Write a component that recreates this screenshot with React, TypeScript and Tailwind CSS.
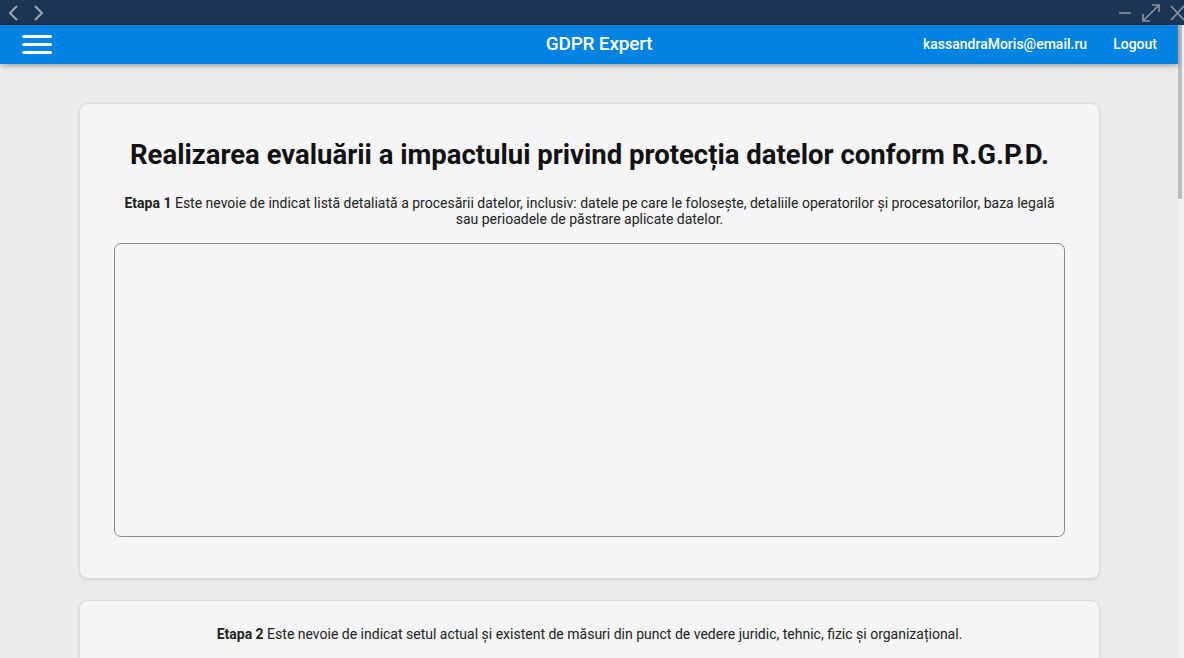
const App = () => {
  return (
    <div
      className="w-[1184px] h-[658px] overflow-hidden flex flex-col bg-[#ebebeb]"
      style={{ fontFamily: "Roboto, 'Liberation Sans', sans-serif" }}
    >
      {/* window bar */}
      <div className="h-[25px] shrink-0 bg-[#1c3553] flex items-center justify-between">
        <div className="flex items-center gap-[14px] pl-[7px]">
          <svg width="12" height="18" viewBox="0 0 12 18" fill="none" stroke="#9ca8b6" strokeWidth="2">
            <path d="M10 2 L3 9 L10 16" />
          </svg>
          <svg width="12" height="18" viewBox="0 0 12 18" fill="none" stroke="#9ca8b6" strokeWidth="2">
            <path d="M2 2 L9 9 L2 16" />
          </svg>
        </div>
        <div className="flex items-center gap-[9px] pr-0">
          <svg width="14" height="18" viewBox="0 0 14 18" fill="none" stroke="#8994a3" strokeWidth="1.6">
            <path d="M1 9 H13" />
          </svg>
          <svg width="20" height="20" viewBox="0 0 20 20" fill="none" stroke="#8994a3" strokeWidth="1.6">
            <path d="M2 18 L18 2 M11 2 H18 V9 M2 11 V18 H9" />
          </svg>
          <svg width="14" height="16" viewBox="0 0 14 16" fill="none" stroke="#8994a3" strokeWidth="1.8">
            <path d="M1 1 L14 15 M14 1 L1 15" />
          </svg>
        </div>
      </div>

      <div className="flex flex-1 min-h-0">
        <div className="flex-1 flex flex-col min-w-0">
          {/* app header */}
          <header className="h-[39px] shrink-0 bg-[#0083e3] shadow-[0_2px_5px_rgba(0,0,0,0.3)] flex items-center pl-[22px] pr-[21px] relative z-10">
            <div className="flex-1">
              <div className="w-[30px] flex flex-col gap-[5px]">
                <span className="block h-[3px] bg-white rounded-sm" />
                <span className="block h-[3px] bg-white rounded-sm" />
                <span className="block h-[3px] bg-white rounded-sm" />
              </div>
            </div>
            <div className="text-white text-[19px] font-medium tracking-[-0.2px] ml-[19px]">GDPR Expert</div>
            <div className="flex-1 flex items-center justify-end gap-[26px] text-white text-[14px] font-medium">
              <span>kassandraMoris@email.ru</span>
              <span>Logout</span>
            </div>
          </header>

          {/* content */}
          <main className="flex flex-col gap-[21px] pt-[39px] pl-[79px] pr-[78px]">
            <section className="bg-[#f5f5f7] rounded-[9px] border border-[#dcdcdc] shadow-[0_1px_3px_rgba(0,0,0,0.12)] px-[34px] pt-[35px] pb-[41px] flex flex-col items-center">
              <h1 className="text-[27.5px] leading-[32px] font-bold text-[#111] text-center whitespace-nowrap">
                Realizarea evaluării a impactului privind protecția datelor conform R.G.P.D.
              </h1>
              <p className="mt-[24px] text-[14px] leading-[16px] text-[#222] text-center px-[10px]">
                <span className="font-bold">Etapa 1</span> Este nevoie de indicat listă detaliată a procesării datelor, inclusiv: datele pe care le folosește, detaliile operatorilor și procesatorilor, baza legală sau perioadele de păstrare aplicate datelor.
              </p>
              <div className="mt-[16px] w-full h-[294px] rounded-[7px] border border-[#8a8a8a] bg-[#f5f5f7]" />
            </section>

            <section className="bg-[#f5f5f7] rounded-[9px] border border-[#dcdcdc] shadow-[0_1px_3px_rgba(0,0,0,0.12)] px-[34px] pt-[25px] pb-[41px] flex flex-col items-center">
              <p className="text-[14px] leading-[16px] text-[#222] text-center">
                <span className="font-bold">Etapa 2</span> Este nevoie de indicat setul actual și existent de măsuri din punct de vedere juridic, tehnic, fizic și organizațional.
              </p>
              <div className="mt-[16px] w-full h-[294px] rounded-[7px] border border-[#8a8a8a] bg-[#f5f5f7]" />
            </section>
          </main>
        </div>

        {/* scrollbar */}
        <div className="w-[6px] shrink-0 bg-[#f0f0f0] flex flex-col">
          <div className="w-[4px] h-[174px] bg-[#bdbdbd]" />
        </div>
      </div>
    </div>
  );
};

export default App;
